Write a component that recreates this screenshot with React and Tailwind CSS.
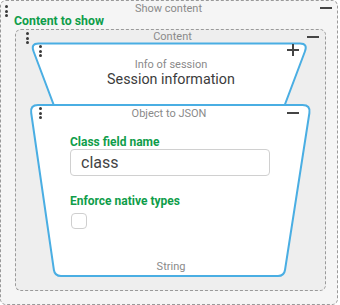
import React from "react";

const Dots = () => (
  <div className="flex flex-col gap-[1.5px]">
    <div className="w-[3px] h-[3px] rounded-full bg-[#3a3a3a]" />
    <div className="w-[3px] h-[3px] rounded-full bg-[#3a3a3a]" />
    <div className="w-[3px] h-[3px] rounded-full bg-[#3a3a3a]" />
  </div>
);

const Minus = () => <div className="w-[12px] h-[2px] bg-[#444]" />;

const Plus = () => (
  <svg width="12" height="12" viewBox="0 0 12 12">
    <path d="M6 0 V12 M0 6 H12" stroke="#444" strokeWidth="2" />
  </svg>
);

export default function App() {
  return (
    <div
      className="w-[338px] h-[305px] border border-dashed border-[#9a9a9a] rounded-[6px] bg-[#f5f5f5] flex flex-col pl-[14px] pr-[11px]"
      style={{ fontFamily: "Roboto, 'Liberation Sans', sans-serif" }}
    >
      {/* outer header */}
      <div className="grid grid-cols-[1fr_auto_1fr] h-[12px] -ml-[10px] -mr-[6px]">
        <div className="pt-[4px]">
          <Dots />
        </div>
        <div className="text-[11px] leading-[12px] text-[#8a8a8a] pt-[2px]">Show content</div>
        <div className="flex justify-end pt-[6px]">
          <Minus />
        </div>
      </div>
      <div className="text-[12.3px] leading-[15px] font-bold text-[#0f9d4a] -ml-[1px] pt-[1px]">Content to show</div>
      {/* inner box */}
      <div className="mt-[0px] w-[311px] h-[262px] border border-dashed border-[#9a9a9a] rounded-[6px] bg-[#eeeeee] flex flex-col">
        <div className="grid grid-cols-[1fr_auto_1fr] h-[12px] pl-[10px] pr-[6px]">
          <div className="pt-[2px]">
            <Dots />
          </div>
          <div className="text-[11px] leading-[12px] text-[#8a8a8a] pt-[1px]">Content</div>
          <div className="flex justify-end pt-[6px]">
            <Minus />
          </div>
        </div>
        {/* block 1 */}
        <div className="relative ml-[13px] w-[284px] h-[61px]">
          <svg className="absolute left-0 top-0 overflow-visible" width="284" height="61">
            <path
              d="M4.6 9.5 Q1.5 1.5 9.5 1.5 L271 1.5 Q279 1.5 275.9 9.5 L254.6 66 L25.9 66 Z"
              fill="#ffffff"
              stroke="#4aaee3"
              strokeWidth="2"
            />
          </svg>
          <div className="relative flex flex-col">
            <div className="flex justify-between pl-[10px] pr-[14px]">
              <div className="pt-[3px]">
                <Dots />
              </div>
              <div className="pt-[2px]">
                <Plus />
              </div>
            </div>
            <div className="text-center text-[11px] leading-[12px] text-[#8a8a8a] mt-[2px]">Info of session</div>
            <div className="text-center text-[14.3px] leading-[16px] text-[#3c3c3c]">Session information</div>
          </div>
        </div>
        {/* block 2 */}
        <div className="relative ml-[13px] w-[284px] h-[175px]">
          <svg className="absolute left-0 top-0 overflow-visible" width="284" height="175">
            <path
              d="M2.2 10 Q1 2 9 2 L273.6 2 Q281.6 2 280.4 10 L256 167 Q255.1 173 249 173 L32 173 Q25.8 173 24.9 167 Z"
              fill="#ffffff"
              stroke="#4aaee3"
              strokeWidth="2"
            />
          </svg>
          <div className="relative flex flex-col h-full">
            <div className="grid grid-cols-[1fr_auto_1fr] pl-[10px] pr-[14px]">
              <div className="pt-[4px]">
                <Dots />
              </div>
              <div className="text-[11px] leading-[12px] text-[#8a8a8a] pt-[5px]">Object to JSON</div>
              <div className="flex justify-end pt-[9px]">
                <Minus />
              </div>
            </div>
            <div className="pl-[41px] flex flex-col">
              <div className="mt-[15px] text-[12px] leading-[14px] font-bold text-[#0f9d4a]">Class field name</div>
              <div className="w-[200px] h-[27px] border border-[#d0d0d0] rounded-[4px] bg-white flex items-center pl-[10px] text-[16px] text-[#444]">
                class
              </div>
              <div className="mt-[18px] text-[12px] leading-[14px] font-bold text-[#0f9d4a]">Enforce native types</div>
              <div className="mt-[5px] ml-[1px] w-[16px] h-[16px] border border-[#cfcfcf] rounded-[4px] bg-white" />
            </div>
            <div className="mt-auto mb-[5px] text-center text-[11px] leading-[12px] text-[#8a8a8a]">String</div>
          </div>
        </div>
      </div>
    </div>
  );
}
